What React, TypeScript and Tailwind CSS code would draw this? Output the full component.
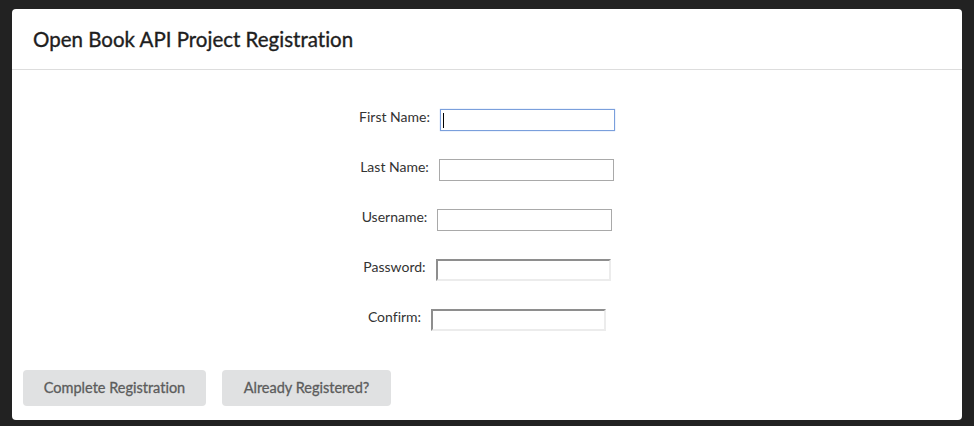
import React from "react"

const fields = [
  { label: "First Name:", kind: "focus" },
  { label: "Last Name:", kind: "plain" },
  { label: "Username:", kind: "plain" },
  { label: "Password:", kind: "inset" },
  { label: "Confirm:", kind: "inset" },
]

function Field({ label, kind }: { label: string; kind: string }) {
  let box = "border border-[#a9a9a9]"
  if (kind === "focus") box = "border border-[#7a9fdc] shadow-[0_0_1px_#9ab8ea]"
  if (kind === "inset") box = "border-2 border-t-[#8e8e8e] border-l-[#8e8e8e] border-r-[#ececec] border-b-[#ececec]"

  return (
    <div className="flex items-center h-[22px]">
      <label className="text-[14px] text-[#333] mr-[10px] leading-none -mt-[6px]">{label}</label>
      <div className={`relative w-[175px] h-[22px] bg-white ${box}`}>
        {kind === "focus" && <div className="absolute left-[2px] top-[3px] w-px h-[15px] bg-black" />}
      </div>
    </div>
  )
}

export default function App() {
  return (
    <div
      className="w-[974px] h-[426px] bg-[#222] pt-[9px] pl-[12px] [font-variant-ligatures:none]"
      style={{ fontFamily: "Lato, 'Open Sans', sans-serif" }}
    >
      <div className="w-[950px] h-[411px] bg-white rounded-[4px] flex flex-col">
        {/* 标题 */}
        <div className="h-[61px] border-b border-[#dddddd] flex items-center pl-[21px]">
          <h1 className="text-[20.5px] font-normal text-[#1e1e1e] [-webkit-text-stroke:0.35px_#1e1e1e]">
            Open Book API Project Registration
          </h1>
        </div>

        {/* 表单 */}
        <div className="flex flex-col items-center gap-[28px] pt-[39px]">
          {fields.map((f) => (
            <Field key={f.label} label={f.label} kind={f.kind} />
          ))}
        </div>

        {/* 按钮 */}
        <div className="flex gap-[16px] pl-[11px] mt-[39px]">
          <button className="h-[36px] w-[183px] bg-[#e0e1e2] rounded-[4px] text-[14.5px] font-normal text-[#5c5c5c] [-webkit-text-stroke:0.3px_#5c5c5c]">
            Complete Registration
          </button>
          <button className="h-[36px] w-[169px] bg-[#e0e1e2] rounded-[4px] text-[14.5px] font-normal text-[#5c5c5c] [-webkit-text-stroke:0.3px_#5c5c5c]">
            Already Registered?
          </button>
        </div>
      </div>
    </div>
  )
}
